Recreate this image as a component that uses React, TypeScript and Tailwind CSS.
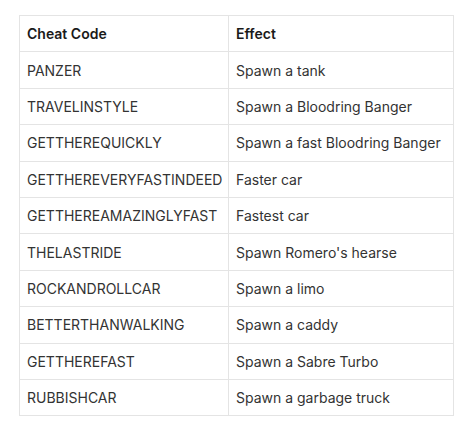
import React from "react";

const rows: [string, string][] = [
  ["PANZER", "Spawn a tank"],
  ["TRAVELINSTYLE", "Spawn a Bloodring Banger"],
  ["GETTHEREQUICKLY", "Spawn a fast Bloodring Banger"],
  ["GETTHEREVERYFASTINDEED", "Faster car"],
  ["GETTHEREAMAZINGLYFAST", "Fastest car"],
  ["THELASTRIDE", "Spawn Romero's hearse"],
  ["ROCKANDROLLCAR", "Spawn a limo"],
  ["BETTERTHANWALKING", "Spawn a caddy"],
  ["GETTHEREFAST", "Spawn a Sabre Turbo"],
  ["RUBBISHCAR", "Spawn a garbage truck"],
];

export default function App() {
  return (
    <div
      className="w-[474px] h-[433px] bg-white pt-[15px] pl-[19px]"
      style={{ fontFamily: "Inter, 'Liberation Sans', sans-serif" }}
    >
      <table className="w-[435px] border-collapse text-[14px] text-[#333333]">
        <colgroup>
          <col className="w-[209px]" />
          <col />
        </colgroup>
        <thead>
          <tr className="h-[36.4px]">
            <th className="border border-[#e4e4e4] text-left font-semibold text-[#1a1a1a] pl-[7px] align-middle">
              Cheat Code
            </th>
            <th className="border border-[#e4e4e4] text-left font-semibold text-[#1a1a1a] pl-[7px] align-middle">
              Effect
            </th>
          </tr>
        </thead>
        <tbody>
          {rows.map(([c, e]) => (
            <tr key={c} className="h-[36.4px]">
              <td className="border border-[#e4e4e4] pl-[7px] align-middle">{c}</td>
              <td className="border border-[#e4e4e4] pl-[7px] align-middle">{e}</td>
            </tr>
          ))}
        </tbody>
      </table>
    </div>
  );
}
